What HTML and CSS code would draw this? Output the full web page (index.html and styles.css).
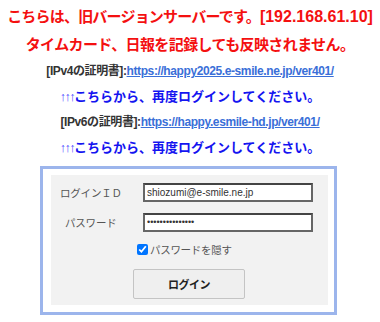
FILE: index.html
```html
<!DOCTYPE html>
<html lang="ja">
<head>
  <meta charset="UTF-8">
  <title>ログイン</title>
  <link rel="stylesheet" href="styles.css">
</head>
<body>
  <div class="notice">
    <p class="warn">こちらは、旧バージョンサーバーです。<span class="ip">[192.168.61.10]</span></p>
    <p class="warn wide">タイムカード、日報を記録しても反映されません。</p>
    <p class="cert">[IPv4の証明書]:<a href="#">https://happy2025.e-smile.ne.jp/ver401/</a></p>
    <p class="relogin"><span class="arrows">↑↑↑</span>こちらから、再度ログインしてください。</p>
    <p class="cert">[IPv6の証明書]:<a href="#">https://happy.esmile-hd.jp/ver401/</a></p>
    <p class="relogin"><span class="arrows">↑↑↑</span>こちらから、再度ログインしてください。</p>
  </div>

  <div class="login-box">
    <form class="login-form">
      <div class="row">
        <label class="label">ログインＩＤ</label>
        <input type="text" value="shiozumi@e-smile.ne.jp">
      </div>
      <div class="row">
        <label class="label pw">パスワード</label>
        <input type="text" class="dots" value="•••••••••••••••">
      </div>
      <div class="check">
        <label><input type="checkbox" checked>パスワードを隠す</label>
      </div>
      <button type="button">ログイン</button>
    </form>
  </div>
</body>
</html>
```

FILE: styles.css
```css
body {
  font-family: "Liberation Sans", "Noto Sans CJK JP", sans-serif;
  background-color: #fff;
  color: #333;
  margin: 0;
  padding: 0;
}
.notice {
  text-align: center;
  padding-top: 3px;
}
.notice p {
  margin: 0;
  font-weight: bold;
  white-space: nowrap;
}
.warn {
  color: #f41010;
  font-size: 15px;
  line-height: 28px;
  letter-spacing: -0.8px;
}
.warn.wide {
  letter-spacing: -0.6px;
}
.warn .ip {
  font-size: 16px;
  letter-spacing: 0;
}
.cert {
  font-size: 12px;
  line-height: 25px;
  letter-spacing: -0.4px;
  color: #333;
}
.cert a {
  color: #3a6fd8;
}
.relogin {
  font-size: 13px;
  line-height: 25px;
  color: #1414f0;
}
.arrows {
  font-weight: normal;
  font-size: 12.5px;
  letter-spacing: -1.5px;
  color: #4a4aff;
}
.login-box {
  margin: 5px 43px 0 40px;
  border: 3px solid #9cb5ec;
  background-color: #fff;
  padding: 6px 6px 7px 8px;
}
.login-form {
  background-color: #f2f2f2;
  padding: 2px 0 6px;
  font-size: 10.5px;
  color: #555;
}
.row {
  display: flex;
  align-items: center;
  height: 30px;
}
.label {
  box-sizing: border-box;
  width: 92px;
  padding-left: 9px;
  letter-spacing: -0.2px;
}
.label.pw {
  padding-left: 14px;
}
.row input {
  box-sizing: border-box;
  width: 170px;
  height: 19px;
  border: 2px solid #666;
  border-top-color: #444;
  padding: 0 2px;
  font-family: "Liberation Sans", sans-serif;
  font-size: 10px;
  color: #333;
}
.row input.dots {
  font-size: 9px;
  letter-spacing: 0;
}
.check {
  margin: 5px 0 0 86px;
  letter-spacing: -0.3px;
}
.check input {
  margin: 0 2px 0 0;
  width: 11px;
  height: 11px;
  vertical-align: -1px;
}
button {
  display: block;
  margin: 12px 0 0 82px;
  width: 112px;
  height: 30px;
  background-color: #efefef;
  border: 1px solid #c4c4c4;
  border-radius: 2px;
  font-family: "Liberation Sans", "Noto Sans CJK JP", sans-serif;
  font-weight: bold;
  font-size: 11px;
  letter-spacing: -0.5px;
  color: #222;
}
```
